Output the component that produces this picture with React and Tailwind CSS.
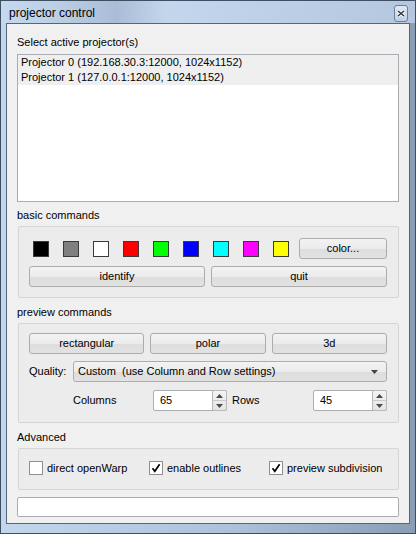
import React from "react";

const swatches = ["#000000", "#808080", "#ffffff", "#ff0000", "#00ff00", "#0000ff", "#00ffff", "#ff00ff", "#ffff00"];

function Btn({ children, className = "" }) {
  return (
    <button className={`h-[21px] rounded-[3px] border border-[#acacac] bg-[linear-gradient(180deg,#f3f3f3_0%,#ebebeb_50%,#dddddd_51%,#e2e2e2_100%)] text-[11px] text-black flex items-center justify-center ${className}`}>
      {children}
    </button>
  );
}

function Label({ children, className = "" }) {
  return <div className={`h-[15px] leading-[15px] text-[11px] text-black ${className}`}>{children}</div>;
}

function Group({ children, className = "" }) {
  return <div className={`ml-[1px] border border-[#d5d5d5] rounded-[2px] bg-[#ececec] pl-[10px] pr-[11px] ${className}`}>{children}</div>;
}

function Spin({ value }) {
  return (
    <div className="w-[74px] h-[21px] flex items-stretch rounded-[2px] border border-[#abadb3] bg-white">
      <div className="flex-1 pl-[6px] flex items-center text-[11px]">{value}</div>
      <div className="w-[15px] flex flex-col border border-[#b8b8b8] rounded-[2px] bg-[linear-gradient(180deg,#f4f4f4,#e4e4e4)] m-[-1px]">
        <div className="flex-1 flex items-center justify-center border-b border-[#c8c8c8]">
          <svg width="7" height="4" viewBox="0 0 7 4"><path d="M0 4 L3.5 0 L7 4 Z" fill="#4a4a4a" /></svg>
        </div>
        <div className="flex-1 flex items-center justify-center">
          <svg width="7" height="4" viewBox="0 0 7 4"><path d="M0 0 L3.5 4 L7 0 Z" fill="#4a4a4a" /></svg>
        </div>
      </div>
    </div>
  );
}

function Check({ checked, label, className = "" }) {
  return (
    <div className={`flex items-center ${className}`}>
      <div className="w-[14px] h-[14px] border border-[#8f8f8f] bg-white flex items-center justify-center">
        {checked && (
          <svg width="10" height="10" viewBox="0 0 10 10">
            <path d="M1.5 5.2 L3.8 8.2 L8.6 1.2" fill="none" stroke="#000" strokeWidth="1.7" />
          </svg>
        )}
      </div>
      <span className="ml-[4px] text-[11px]">{label}</span>
    </div>
  );
}

export default function App() {
  return (
    <div
      className="w-[416px] h-[534px] border border-[#3f4e61] flex flex-col bg-[linear-gradient(90deg,#c4d6ec_0%,#aec2da_55%,#8a9db5_100%)] text-black"
      style={{ fontFamily: '"Liberation Sans", Arial, sans-serif' }}
    >
      <div className="h-[22px] flex justify-between pl-[8px] pr-[7px] bg-[linear-gradient(90deg,#c5d8ee_0%,#bcd0e8_12%,#a9bdd6_28%,#c3d6ec_40%,#bed1e9_60%,#b9cce4_80%,#b4c7df_100%)]">
        <span className="text-[12px] leading-[22px] pt-[1px]">projector control</span>
        <div className="mt-[4px] w-[14px] h-[17px] rounded-[3px] border border-[#6e8098] bg-[linear-gradient(180deg,#dfe8f4,#bfcfe3)] flex items-center justify-center">
          <svg width="8" height="7" viewBox="0 0 8 7">
            <path d="M1 1 L7 6 M7 1 L1 6" stroke="#ffffff" strokeWidth="3" />
            <path d="M1 1 L7 6 M7 1 L1 6" stroke="#2b3440" strokeWidth="1.5" />
          </svg>
        </div>
      </div>

      <div className="flex-1 mx-[5px] mb-[9px] border border-[#56667a] bg-[#f0f0f0] pl-[10px] pr-[10px] pt-[11px]">
        <Label>Select active projector(s)</Label>
        <div className="mt-[4px] h-[148px] border border-[#abadb3] bg-white">
          <div className="h-[15px] leading-[15px] pl-[3px] text-[11px] bg-[#efefef]">Projector 0 (192.168.30.3:12000, 1024x1152)</div>
          <div className="h-[15px] leading-[15px] pl-[3px] text-[11px] bg-[#efefef]">Projector 1 (127.0.0.1:12000, 1024x1152)</div>
        </div>

        <Label className="mt-[6px]">basic commands</Label>
        <Group className="mt-[3px] pt-[11px] pb-[10px]">
          <div className="flex items-center h-[21px]">
            <div className="flex items-center gap-[14px] pl-[4px]">
              {swatches.map((c) => (
                <div key={c} className="w-[16px] h-[16px] border border-[#3a3a3a]" style={{ backgroundColor: c }} />
              ))}
            </div>
            <Btn className="ml-auto w-[88px]">color...</Btn>
          </div>
          <div className="grid grid-cols-2 gap-[6px] mt-[7px]">
            <Btn>identify</Btn>
            <Btn>quit</Btn>
          </div>
        </Group>

        <Label className="mt-[7px]">preview commands</Label>
        <Group className="mt-[3px] pt-[9px] pb-[11px]">
          <div className="grid grid-cols-3 gap-[6px]">
            <Btn>rectangular</Btn>
            <Btn>polar</Btn>
            <Btn>3d</Btn>
          </div>
          <div className="flex items-center mt-[7px]">
            <span className="w-[44px] text-[11px]">Quality:</span>
            <Btn className="flex-1 !justify-between pl-[4px] pr-[8px]">
              <span className="whitespace-pre">Custom  (use Column and Row settings)</span>
              <svg width="7" height="4" viewBox="0 0 7 4"><path d="M0 0 L3.5 4 L7 0 Z" fill="#444" /></svg>
            </Btn>
          </div>
          <div className="flex items-center mt-[8px] pl-[44px]">
            <span className="w-[80px] text-[11px]">Columns</span>
            <Spin value="65" />
            <span className="w-[81px] ml-[5px] text-[11px]">Rows</span>
            <Spin value="45" />
          </div>
        </Group>

        <Label className="mt-[7px]">Advanced</Label>
        <Group className="mt-[3px] pt-[12px] pb-[14px]">
          <div className="flex items-center h-[14px]">
            <Check label="direct openWarp" className="w-[120px]" />
            <Check checked label="enable outlines" className="w-[120px]" />
            <Check checked label="preview subdivision" />
          </div>
        </Group>

        <div className="mt-[7px] h-[20px] border border-[#abadb3] rounded-[2px] bg-white" />
      </div>
    </div>
  );
}
